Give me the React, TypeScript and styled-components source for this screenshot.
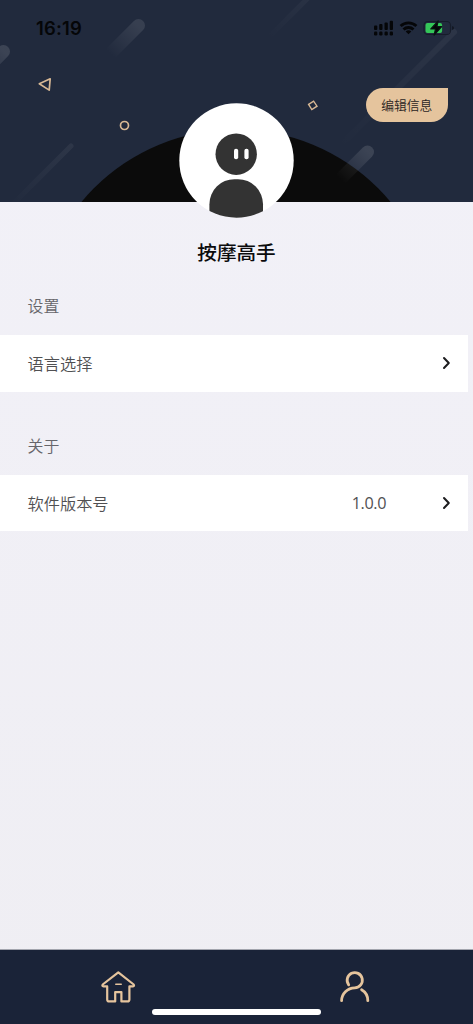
import React from "react";
import styled, { createGlobalStyle } from "styled-components";

const GlobalStyle = createGlobalStyle`
  * { box-sizing: border-box; }
  body {
    margin: 0;
    font-family: Inter, "Noto Sans CJK SC", sans-serif;
    -webkit-font-smoothing: antialiased;
  }
`;

const Screen = styled.main`
  display: flex;
  flex-direction: column;
  width: 473px;
  height: 1024px;
  overflow: hidden;
  background: linear-gradient(#f2f1f8, #efeef3);
`;

const Header = styled.header`
  position: relative;
  flex: none;
  height: 202px;
  background: #212a3d;
  overflow: hidden;
`;

const Backdrop = styled.svg`
  position: absolute;
  inset: 0;
`;

const StatusBar = styled.div`
  position: relative;
  display: flex;
  justify-content: space-between;
  align-items: center;
  height: 56px;
  padding: 0 19px 0 36px;
`;

const Clock = styled.time`
  font-size: 18.4px;
  font-weight: 600;
  letter-spacing: 0.2px;
  line-height: 24px;
  color: #050608;
`;

const EditRow = styled.div`
  position: relative;
  display: flex;
  justify-content: flex-end;
  padding: 32px 25px 0 0;
`;

const EditButton = styled.button`
  width: 82.5px;
  height: 34px;
  padding: 0 0 1px;
  border: 0;
  border-radius: 17px 0 17px 17px;
  background: #e5c49d;
  color: #2a241f;
  font: 350 12.8px/32px "Noto Sans CJK SC", sans-serif;
`;

const Profile = styled.section`
  position: relative;
  display: flex;
  flex-direction: column;
  align-items: center;
  height: 163px;
  margin-top: -99px;
`;

const Name = styled.h1`
  margin: 18px 0 0;
  font: 500 19.6px/32px "Noto Sans CJK SC", sans-serif;
  color: #0b0b0c;
`;

const Group = styled.section`
  flex: none;
  height: 139.5px;
`;

const GroupTitle = styled.h2`
  height: 69px;
  margin: 0;
  padding: 28px 0 0 27.6px;
  font: 350 15.9px/23.8px "Noto Sans CJK SC", sans-serif;
  color: #66656a;
`;

const Row = styled.div`
  display: flex;
  align-items: center;
  width: 468px;
  height: 56.5px;
  padding: 0 17px 0 28px;
  background: #fff;
  color: #505052;
  font-size: 16.2px;
`;

const RowLabel = styled.span`
  flex: 1;
  margin-left: -0.4px;
  font-family: "Noto Sans CJK SC", sans-serif;
  font-weight: 350;
  line-height: 24px;
`;

const RowValue = styled.span`
  margin-right: 56px;
  font-family: "Open Sans", sans-serif;
  font-weight: 400;
  font-size: 16.2px;
  letter-spacing: -0.4px;
  line-height: 24px;
`;

const TabBar = styled.nav`
  position: relative;
  display: flex;
  flex: none;
  height: 75px;
  margin-top: auto;
  border-top: 1px solid #a3a5ae;
  background: #1a2338;
`;

const Tab = styled.a`
  display: flex;
  flex: 1;
  justify-content: center;
  padding-top: 19px;
`;

const HomeIndicator = styled.div`
  position: absolute;
  left: 152px;
  bottom: 9px;
  width: 169px;
  height: 6px;
  border-radius: 3px;
  background: #fff;
`;

const streaks = [
  { x1: 138.5, y1: 25.5, x2: 110, y2: 54, w: 13, o: 0.1 },
  { x1: 3.5, y1: 51.5, x2: -23, y2: 78, w: 13, o: 0.12 },
  { x1: 367.5, y1: 152, x2: 340, y2: 179.5, w: 13, o: 0.12 },
  { x1: 71, y1: 146, x2: 10, y2: 207, w: 5, o: 0.055 },
  { x1: 454, y1: 32, x2: 338, y2: 148, w: 6, o: 0.05 },
  { x1: 311, y1: -5, x2: 268, y2: 38, w: 5, o: 0.04 },
];

const HeaderArt = () => (
  <Backdrop width="473" height="202" viewBox="0 0 473 202" aria-hidden="true">
    <defs>
      {streaks.map((s, i) => (
        <linearGradient key={i} id={`streak${i}`} gradientUnits="userSpaceOnUse" x1={s.x1} y1={s.y1} x2={s.x2} y2={s.y2}>
          <stop offset="0" stopColor="#fff" stopOpacity={s.o} />
          <stop offset="1" stopColor="#fff" stopOpacity="0" />
        </linearGradient>
      ))}
    </defs>
    <circle cx="236" cy="330.5" r="201" fill="#0b0b0b" />
    {streaks.map((s, i) => (
      <line key={i} x1={s.x1} y1={s.y1} x2={s.x2} y2={s.y2} stroke={`url(#streak${i})`} strokeWidth={s.w} strokeLinecap="round" />
    ))}
    <g fill="none" stroke="#d9b995" strokeWidth="1.7">
      <path d="M39.3 83.8 50.2 78.8 49.2 90.1Z" strokeLinejoin="round" />
      <circle cx="124.5" cy="125.5" r="4" />
      <path d="m308.6 104.4 5-3.2 3.4 5-5.2 3.3z" strokeWidth="1.4" />
    </g>
  </Backdrop>
);

const StatusIcons = () => (
  <svg width="80" height="20" viewBox="374 18.5 80 20" aria-hidden="true">
    <g fill="#050608">
      <rect x="374" y="26" width="3.3" height="4.5" rx="1" />
      <rect x="379.2" y="24.6" width="3.3" height="5.9" rx="1" />
      <rect x="384.5" y="23" width="3.3" height="7.5" rx="1" />
      <rect x="389.7" y="21.2" width="3.3" height="9.3" rx="1" />
      <rect x="374" y="32" width="3.3" height="4" rx="1.2" />
      <rect x="379.2" y="32" width="3.3" height="4" rx="1.2" />
      <rect x="384.5" y="32" width="3.3" height="4" rx="1.2" />
      <rect x="389.7" y="32" width="3.3" height="4" rx="1.2" />
      <path d="m408.5 34.8-2.8-2.8a4 4 0 0 1 5.6 0z" />
    </g>
    <g fill="none" stroke="#050608" strokeWidth="2.8">
      <path d="M400.6 26.6a11.3 11.3 0 0 1 15.8 0" />
      <path d="M403.5 30a7.2 7.2 0 0 1 10 0" />
    </g>
    <rect x="424" y="22" width="26.5" height="13" rx="3.8" fill="none" stroke="#161c2a" strokeWidth="1.1" />
    <path d="M452.2 26.5v4q1.7-.6 1.7-2t-1.7-2" fill="#10151f" />
    <rect x="425.5" y="23.4" width="16.6" height="10.2" rx="2" fill="#34c759" />
    <path d="M438.2 21.4 430.8 29.5h4.7l-1.4 6.2 7.6-8.5h-4.8z" fill="#050608" stroke="#0a1413" strokeWidth="1.2" strokeLinejoin="round" />
  </svg>
);

const AvatarImage = styled.svg`
  flex: none;
`;

const Avatar = () => (
  <AvatarImage width="115" height="115" viewBox="179 103 115 115" role="img" aria-label="头像">
    <clipPath id="avatar">
      <circle cx="236.5" cy="160.5" r="57.2" />
    </clipPath>
    <g clipPath="url(#avatar)">
      <rect x="178" y="103" width="117" height="115" fill="#fff" />
      <circle cx="236.2" cy="154.2" r="20.7" fill="#333" />
      <rect x="209.4" y="179.2" width="53.6" height="60" rx="25" fill="#333" />
      <rect x="234" y="148.7" width="4.2" height="10.6" rx="2" fill="#fff" />
      <rect x="244.4" y="148.7" width="4.2" height="10.6" rx="2" fill="#fff" />
    </g>
  </AvatarImage>
);

const Chevron = () => (
  <svg width="9" height="14" viewBox="0 0 9 14" aria-hidden="true">
    <path d="m2 2 4.8 5L2 12" fill="none" stroke="#1c1c1e" strokeWidth="2" strokeLinecap="round" strokeLinejoin="round" />
  </svg>
);

const HomeIcon = () => (
  <svg width="36" height="36" viewBox="100 969 36 36" aria-hidden="true">
    <g fill="none" stroke="#e5c49d" strokeWidth="2.2" strokeLinecap="round" strokeLinejoin="round">
      <path d="M118.3 972.4 133.7 984.5q1 1.5-.9 1.9h-3.4v13q0 2-2 2h-6v-9.3h-6.2v9.3h-6q-2 0-2-2v-13h-3.6q-1.9-.4-.9-1.9z" />
      <path d="M115.8 984.3h5.4" strokeWidth="1.6" />
    </g>
  </svg>
);

const PersonIcon = () => (
  <svg width="36" height="36" viewBox="337 969 36 36" aria-hidden="true">
    <g fill="none" stroke="#e5c49d" strokeWidth="2.8" strokeLinecap="round">
      <path d="M348.7 984.8a7.6 7.6 0 1 1 6.1 3C347.3 987.9 341.6 993.8 341.6 1000.7" />
      <path d="M361.6 989.8c4.1 2.4 6.2 6.4 6.2 10.9" />
    </g>
  </svg>
);

export default function App() {
  return (
    <Screen>
      <GlobalStyle />
      <Header>
        <HeaderArt />
        <StatusBar>
          <Clock>16:19</Clock>
          <StatusIcons />
        </StatusBar>
        <EditRow>
          <EditButton>编辑信息</EditButton>
        </EditRow>
      </Header>
      <Profile>
        <Avatar />
        <Name>按摩高手</Name>
      </Profile>
      <Group>
        <GroupTitle>设置</GroupTitle>
        <Row>
          <RowLabel>语言选择</RowLabel>
          <Chevron />
        </Row>
      </Group>
      <Group>
        <GroupTitle>关于</GroupTitle>
        <Row>
          <RowLabel>软件版本号</RowLabel>
          <RowValue>1.0.0</RowValue>
          <Chevron />
        </Row>
      </Group>
      <TabBar>
        <Tab aria-label="首页">
          <HomeIcon />
        </Tab>
        <Tab aria-label="我的">
          <PersonIcon />
        </Tab>
        <HomeIndicator />
      </TabBar>
    </Screen>
  );
}
